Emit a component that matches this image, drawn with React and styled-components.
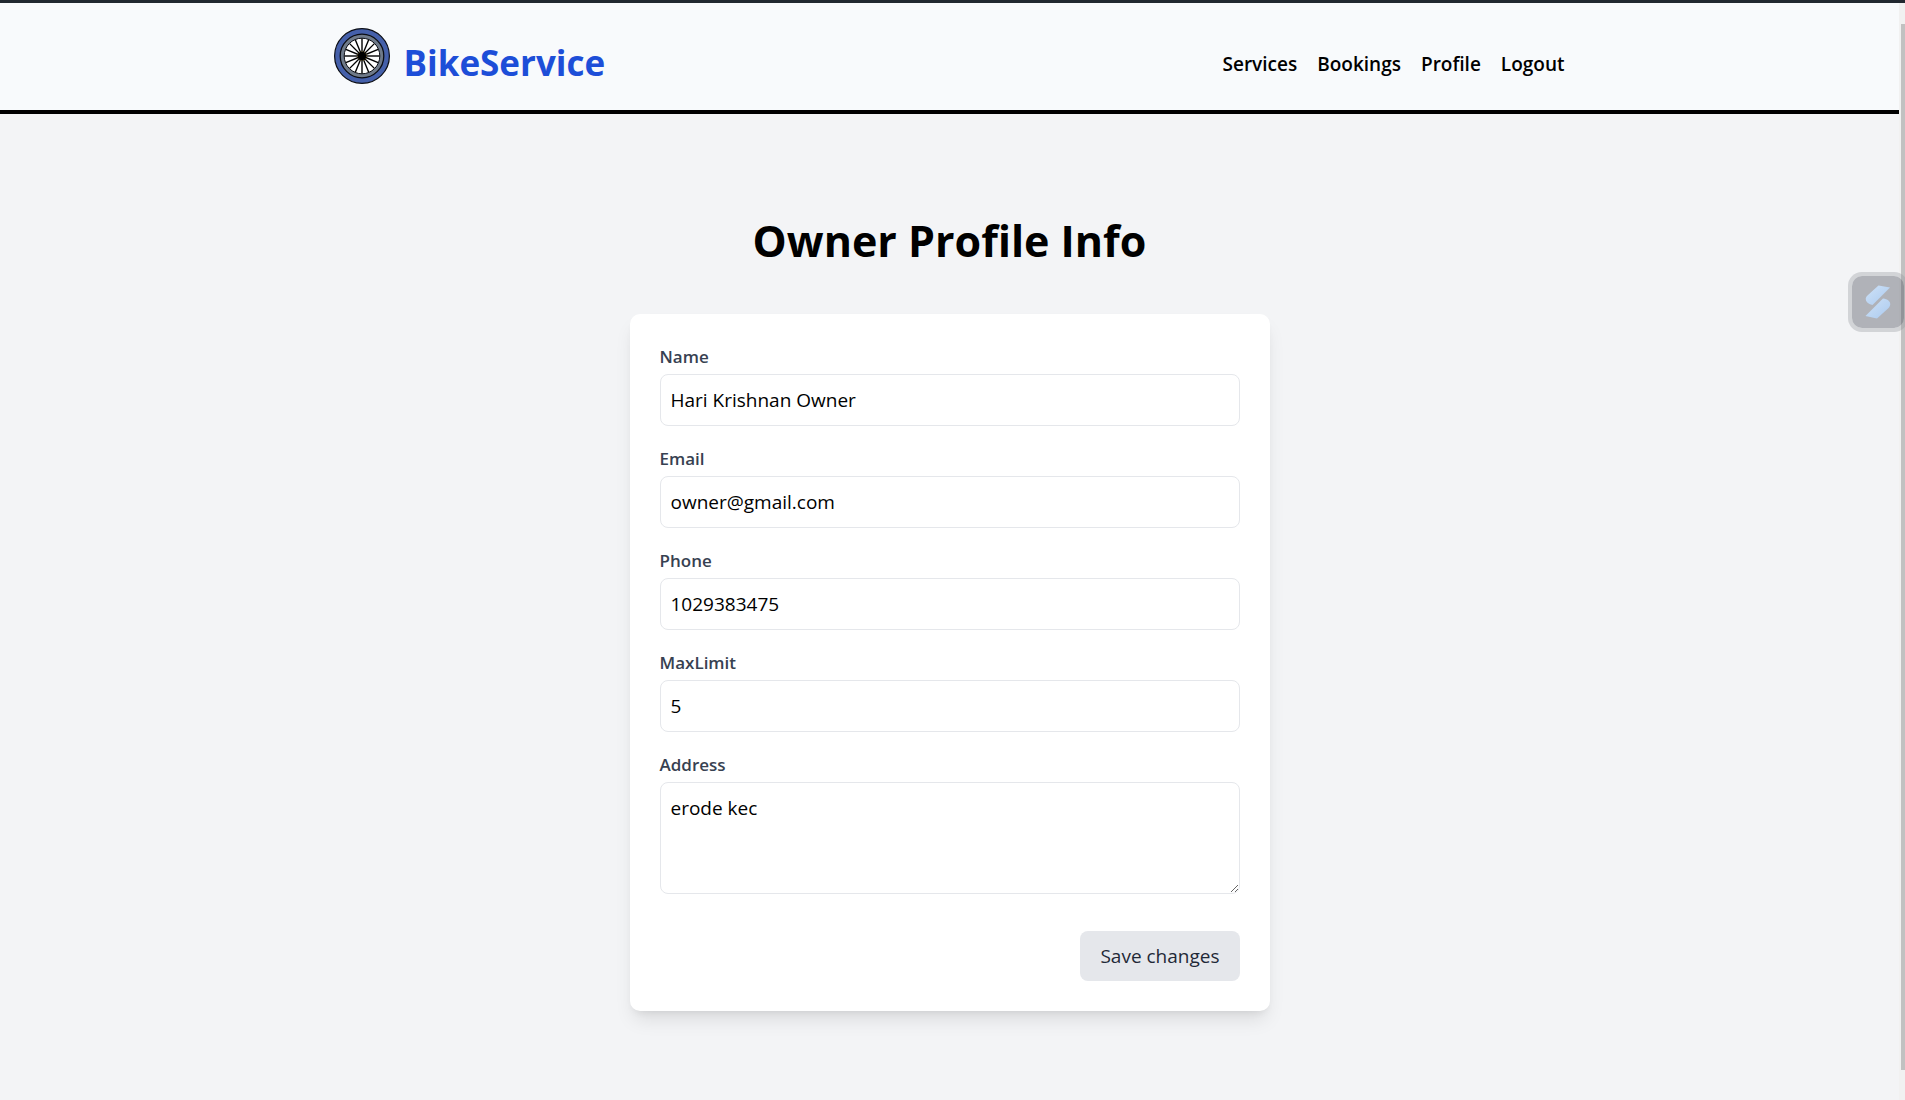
import React from "react";
import styled, { createGlobalStyle } from "styled-components";

const GlobalStyle = createGlobalStyle`
  *, *::before, *::after { box-sizing: border-box; }
  body {
    margin: 0;
    background: #f3f4f6;
    color: #000;
    font-family: "Segoe UI", "Open Sans", "Noto Sans", sans-serif;
    font-size: 19px;
    line-height: 30px;
    overflow: hidden;
  }
`;

const Shell = styled.div`
  display: flex;
  flex-direction: column;
  height: 100vh;
  overflow: hidden;
`;

const TopStrip = styled.div`
  flex: none;
  height: 3px;
  background: #212830;
`;

const Viewport = styled.div`
  display: flex;
  flex: 1;
  min-height: 0;
`;

const Page = styled.div`
  flex: 1;
  min-width: 0;
`;

const Track = styled.div`
  width: 6px;
  padding: 21px 0 30px 2px;
  background: #f1f1f1;
`;

const Thumb = styled.div`
  height: 100%;
  background: #c1c1c1;
`;

const Header = styled.header`
  background: #f8fafc;
  border-bottom: 4px solid #000;
`;

const HeaderInner = styled.div`
  display: flex;
  justify-content: space-between;
  align-items: center;
  max-width: 1280px;
  margin: 0 auto;
  padding: 25px 25px 22px 24px;
`;

const Brand = styled.a`
  display: flex;
  align-items: flex-start;
  gap: 14px;
  color: #1d4ed8;
  font-size: 35px;
  font-weight: 700;
  line-height: 50px;
  text-decoration: none;

  span { padding-top: 10px; }
  svg { display: block; }
`;

const Nav = styled.nav`
  display: flex;
  gap: 20px;
  padding-top: 12px;
`;

const NavLink = styled.a`
  color: #000;
  font-size: 19px;
  font-weight: 600;
  text-decoration: none;
`;

const Main = styled.main`
  display: flex;
  flex-direction: column;
  align-items: center;
  padding: 102px 20px;
`;

const Title = styled.h1`
  margin: 0 0 48px;
  font-size: 43px;
  font-weight: 700;
  line-height: 50px;
`;

const Card = styled.form`
  display: flex;
  flex-direction: column;
  gap: 20px;
  width: 100%;
  max-width: 640px;
  padding: 30px;
  border-radius: 10px;
  background: #fff;
  box-shadow: 0 12px 19px -4px rgba(0, 0, 0, 0.1), 0 5px 8px -5px rgba(0, 0, 0, 0.1);
`;

const Field = styled.div`
  display: flex;
  flex-direction: column;
  gap: 5px;
`;

const Label = styled.label`
  color: #374151;
  font-size: 17px;
  font-weight: 600;
  line-height: 25px;
`;

const Input = styled.input`
  width: 100%;
  height: 52px;
  padding: 10px;
  border: 1px solid #e5e7eb;
  border-radius: 8px;
  background: #fff;
  color: #000;
  font: inherit;
  outline: none;
`;

const TextArea = styled(Input)`
  display: block;
  height: auto;
  resize: vertical;
`;

const Actions = styled.div`
  display: flex;
  justify-content: flex-end;
  padding-top: 17px;
`;

const SaveButton = styled.button`
  padding: 10px 20px;
  border: 0;
  border-radius: 8px;
  background: #e5e7eb;
  color: #1f2937;
  font: inherit;
`;

const Assistant = styled.button`
  position: fixed;
  top: 272px;
  right: -3px;
  display: grid;
  place-items: center;
  width: 60px;
  height: 60px;
  padding: 0;
  border: 4px solid rgba(150, 152, 158, 0.35);
  border-radius: 14px;
  background: rgba(75, 80, 92, 0.4);
  background-clip: padding-box;
`;

const SPOKES = Array.from({ length: 16 }, (_, i) => i * 22.5);

function Wheel() {
  return (
    <svg width="56" height="56" viewBox="0 0 56 56" aria-hidden="true">
      <circle cx="28" cy="28" r="27.4" fill="#4560aa" stroke="#0b0d14" strokeWidth="1.2" />
      <circle cx="28" cy="28" r="21.8" fill="#6f7a89" stroke="#0b0d14" strokeWidth="1.3" />
      <circle cx="28" cy="28" r="17.8" fill="#fff" stroke="#0b0d14" strokeWidth="1" />
      {SPOKES.map((angle) => (
        <line key={angle} x1="28" y1="28" x2="28" y2="10.5" stroke="#000" strokeWidth="1.4" transform={`rotate(${angle} 28 28)`} />
      ))}
      <circle cx="28" cy="28" r="4.6" fill="#000" stroke="#c49a2c" strokeWidth="0.7" strokeDasharray="0.8 1.8" />
    </svg>
  );
}

function AssistantMark() {
  return (
    <svg width="26" height="34" viewBox="0 0 26 34" aria-hidden="true">
      <defs>
        <linearGradient id="mark" x1="0" y1="0" x2="1" y2="1">
          <stop offset="0" stopColor="#cfe2f7" />
          <stop offset="1" stopColor="#abcaef" />
        </linearGradient>
      </defs>
      <path d="M13.5 0.5 L25 2.5 L7.5 20 C3 19 0.5 16.5 0.8 13.5 C1 12 2 11 3 10 Z" fill="url(#mark)" />
      <path d="M12 33.5 L0.5 31 L18 13.5 C22.5 14 25.5 16.5 25.2 19.5 C25 21.3 24 22.5 23 23.5 Z" fill="url(#mark)" />
    </svg>
  );
}

const LINKS = ["Services", "Bookings", "Profile", "Logout"];

const FIELDS = [
  { id: "name", label: "Name", value: "Hari Krishnan Owner", type: "text" },
  { id: "email", label: "Email", value: "owner@gmail.com", type: "email" },
  { id: "phone", label: "Phone", value: "1029383475", type: "tel" },
  { id: "maxLimit", label: "MaxLimit", value: "5", type: "text" },
];

export default function App() {
  return (
    <>
      <GlobalStyle />
      <Shell>
        <TopStrip />
        <Viewport>
          <Page>
            <Header>
              <HeaderInner>
                <Brand href="#home">
                  <Wheel />
                  <span>BikeService</span>
                </Brand>
                <Nav>
                  {LINKS.map((link) => (
                    <NavLink key={link} href={`#${link.toLowerCase()}`}>{link}</NavLink>
                  ))}
                </Nav>
              </HeaderInner>
            </Header>
            <Main>
              <Title>Owner Profile Info</Title>
              <Card onSubmit={(event) => event.preventDefault()}>
                {FIELDS.map(({ id, label, value, type }) => (
                  <Field key={id}>
                    <Label htmlFor={id}>{label}</Label>
                    <Input id={id} type={type} defaultValue={value} />
                  </Field>
                ))}
                <Field>
                  <Label htmlFor="address">Address</Label>
                  <TextArea as="textarea" id="address" rows={3} defaultValue="erode kec" />
                </Field>
                <Actions>
                  <SaveButton type="submit">Save changes</SaveButton>
                </Actions>
              </Card>
            </Main>
          </Page>
          <Track>
            <Thumb />
          </Track>
        </Viewport>
      </Shell>
      <Assistant type="button" aria-label="Open assistant">
        <AssistantMark />
      </Assistant>
    </>
  );
}
